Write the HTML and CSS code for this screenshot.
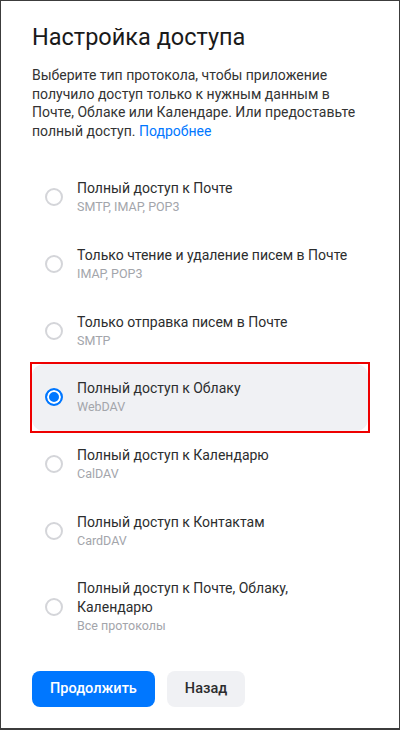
FILE: index.html
```html
<!DOCTYPE html>
<html lang="ru">
<head>
<meta charset="utf-8">
<title>Настройка доступа</title>
<link rel="stylesheet" href="styles.css">
</head>
<body>
<div class="frame">
  <h1 class="title">Настройка доступа</h1>
  <p class="lead">Выберите тип протокола, чтобы приложение получило доступ только к нужным данным в Почте, Облаке или Календаре. Или предоставьте полный доступ. <a class="link" href="#">Подробнее</a></p>
  <ul class="options">
    <li class="option"><span class="radio"></span><div class="text"><div class="name">Полный доступ к Почте</div><div class="proto">SMTP, IMAP, POP3</div></div></li>
    <li class="option"><span class="radio"></span><div class="text"><div class="name">Только чтение и удаление писем в Почте</div><div class="proto">IMAP, POP3</div></div></li>
    <li class="option"><span class="radio"></span><div class="text"><div class="name">Только отправка писем в Почте</div><div class="proto">SMTP</div></div></li>
    <li class="option selected"><span class="radio"></span><div class="text"><div class="name">Полный доступ к Облаку</div><div class="proto">WebDAV</div></div></li>
    <li class="option"><span class="radio"></span><div class="text"><div class="name">Полный доступ к Календарю</div><div class="proto">CalDAV</div></div></li>
    <li class="option"><span class="radio"></span><div class="text"><div class="name">Полный доступ к Контактам</div><div class="proto">CardDAV</div></div></li>
    <li class="option"><span class="radio"></span><div class="text"><div class="name">Полный доступ к Почте, Облаку,<br>Календарю</div><div class="proto">Все протоколы</div></div></li>
  </ul>
  <div class="actions">
    <button class="btn primary" type="button">Продолжить</button>
    <button class="btn secondary" type="button">Назад</button>
  </div>
</div>
</body>
</html>
```
FILE: styles.css
```css
* { box-sizing: border-box; }
html, body { margin: 0; padding: 0; background: #fff; }
body { font-family: Roboto, "Noto Sans", Arial, sans-serif; color: #2c2d2e; }
.frame {
  width: 400px;
  height: 730px;
  border: 1px solid #3c3c3c;
  border-bottom-width: 2px;
  padding: 22px 31px 0;
}
.title {
  margin: 0;
  font-size: 23.5px;
  line-height: 28px;
  font-weight: 400;
  color: #1a1a1a;
}
.lead {
  margin: 15px 0 0;
  font-size: 14px;
  line-height: 18.6px;
  color: #333;
}
.link { color: #0077ff; text-decoration: none; }
.options {
  list-style: none;
  margin: 24px 0 0;
  padding: 0;
}
.option {
  position: relative;
  display: flex;
  align-items: center;
  gap: 14px;
  padding: 15px 13px 15.67px;
  border-radius: 12px;
}
.option.selected {
  background: #f0f1f4;
}
.option.selected::after {
  content: "";
  position: absolute;
  top: -2px;
  left: -2px;
  right: -2px;
  bottom: -2px;
  border: 2px solid #ee0000;
  pointer-events: none;
}
.radio {
  flex: none;
  width: 18px;
  height: 18px;
  border-radius: 50%;
  border: 2px solid #d4d5d9;
  background: #fff;
}
.selected .radio {
  border-color: #0077ff;
  background: #0077ff;
  box-shadow: inset 0 0 0 2px #fff;
}
.name {
  font-size: 14px;
  line-height: 19px;
  color: #2c2d2e;
}
.proto {
  font-size: 12.5px;
  line-height: 17px;
  color: #a3a5ab;
}
.actions {
  display: flex;
  gap: 12px;
  margin-top: 21px;
}
.btn {
  font-family: inherit;
  font-size: 14.5px;
  font-weight: 500;
  height: 36px;
  border: 0;
  border-radius: 8px;
  padding: 0 18px;
}
.primary { background: #0077ff; color: #fff; }
.secondary { background: #f0f1f4; color: #2c2d2e; }
```
